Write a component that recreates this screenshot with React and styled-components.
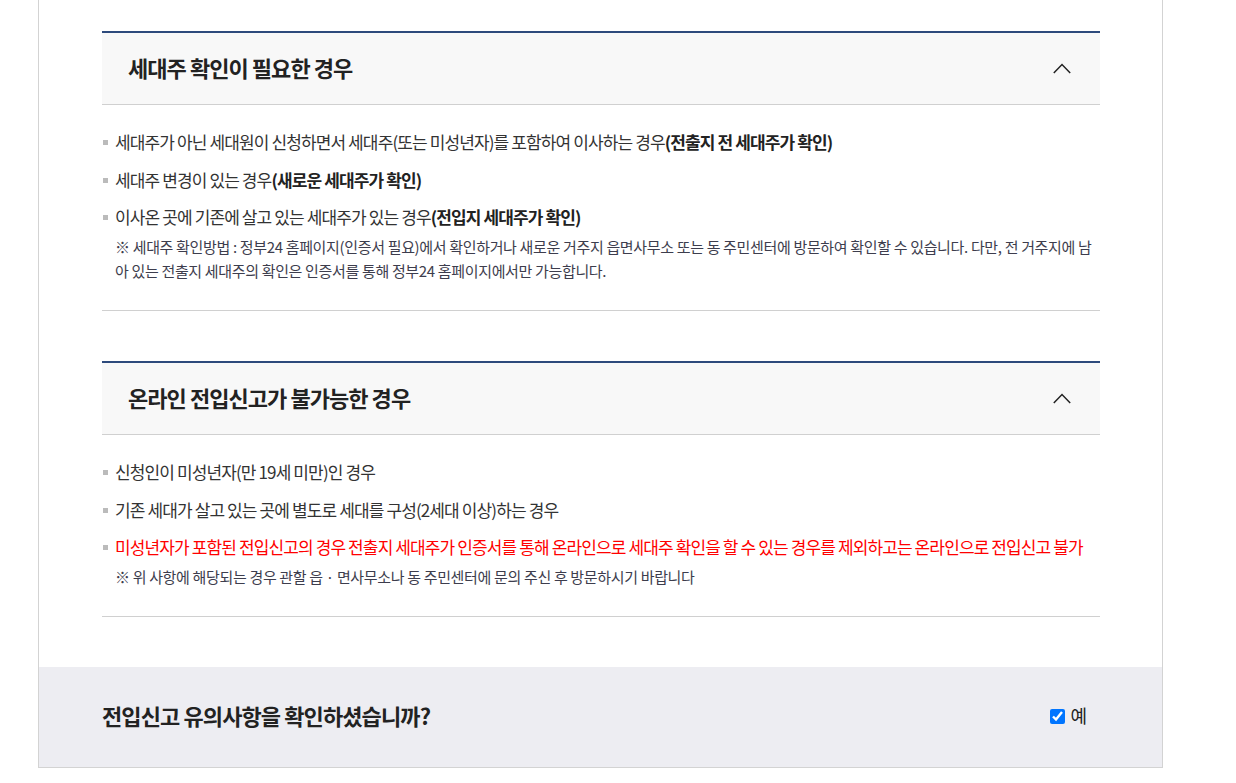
import React, { useState } from "react";
import styled, { createGlobalStyle } from "styled-components";

const GlobalStyle = createGlobalStyle`
  html, body {
    margin: 0;
    padding: 0;
    background: #fff;
  }
  body {
    font-family: "Noto Sans CJK KR", "Noto Sans", sans-serif;
    color: #222;
  }
`;

const Page = styled.div`
  padding-left: 38px;
  padding-bottom: 15px;
`;

const Panel = styled.div`
  width: 1125px;
  box-sizing: border-box;
  border-left: 1px solid #d3d3d3;
  border-right: 1px solid #d3d3d3;
  border-bottom: 1px solid #d3d3d3;
`;

const Content = styled.div`
  padding: 31px 62px 0 63px;
`;

const Accordion = styled.section`
  border-top: 2px solid #2d4a7c;
  border-bottom: 1px solid #d0d0d0;
  margin-bottom: 50px;
`;

const Header = styled.button`
  display: flex;
  align-items: center;
  justify-content: space-between;
  width: 100%;
  height: 72px;
  padding: 0 29px 0 26px;
  box-sizing: border-box;
  background: #f8f8f8;
  border: 0;
  border-bottom: 1px solid #d0d0d0;
  cursor: pointer;
  font-family: inherit;
`;

const HeaderTitle = styled.h3`
  margin: 0 0 3px;
  font-size: 22px;
  font-weight: 700;
  letter-spacing: -0.95px;
  color: #222;
  line-height: 1;
`;

const Chevron = ({ open }) => (
  <svg width="18" height="11" viewBox="0 0 18 11" style={{ transform: open ? "none" : "rotate(180deg)" }}>
    <polyline points="0.8,10 9,1.5 17.2,10" fill="none" stroke="#222" strokeWidth="1.5" />
  </svg>
);

const List = styled.ul`
  list-style: none;
  margin: 0;
  padding: 25px 0 27px;
`;

const Item = styled.li`
  position: relative;
  padding-left: 13px;
  font-size: 17px;
  line-height: 24px;
  letter-spacing: -0.88px;
  color: ${(p) => (p.$alert ? "#ff0000" : "#333")};
  & + & {
    margin-top: 13.5px;
  }
  &::before {
    content: "";
    position: absolute;
    left: 1px;
    top: 10px;
    width: 5px;
    height: 5px;
    background: #bbb;
  }
  b {
    font-weight: 700;
    color: #222;
  }
`;

const Note = styled.p`
  margin: 6px 0 0;
  padding-left: 13px;
  font-size: 15px;
  line-height: 24px;
  letter-spacing: -0.34px;
  color: #3d3d4d;
`;

const ConfirmBar = styled.div`
  display: flex;
  align-items: center;
  justify-content: space-between;
  height: 100px;
  box-sizing: border-box;
  padding: 0 75px 5px 63px;
  background: #ededf2;
`;

const ConfirmTitle = styled.h3`
  margin: 0;
  font-size: 22px;
  font-weight: 700;
  letter-spacing: -0.9px;
  color: #222;
`;

const CheckLabel = styled.label`
  display: flex;
  align-items: center;
  gap: 5px;
  font-size: 18px;
  line-height: 1;
  color: #222;
  cursor: pointer;
  input {
    width: 15px;
    height: 15px;
    margin: 4px 0 0;
    accent-color: #0075ff;
  }
`;

function Section({ title, children }) {
  const [open, setOpen] = useState(true);
  return (
    <Accordion>
      <Header onClick={() => setOpen(!open)}>
        <HeaderTitle>{title}</HeaderTitle>
        <Chevron open={open} />
      </Header>
      {open && children}
    </Accordion>
  );
}

export default function App() {
  const [checked, setChecked] = useState(true);
  return (
    <Page>
      <GlobalStyle />
      <Panel>
        <Content>
          <Section title="세대주 확인이 필요한 경우">
            <List>
              <Item>
                세대주가 아닌 세대원이 신청하면서 세대주(또는 미성년자)를 포함하여 이사하는 경우<b>(전출지 전 세대주가 확인)</b>
              </Item>
              <Item>
                세대주 변경이 있는 경우<b>(새로운 세대주가 확인)</b>
              </Item>
              <Item>
                이사온 곳에 기존에 살고 있는 세대주가 있는 경우<b>(전입지 세대주가 확인)</b>
              </Item>
              <Note>
                ※ 세대주 확인방법 : 정부24 홈페이지(인증서 필요)에서 확인하거나 새로운 거주지 읍면사무소 또는 동 주민센터에 방문하여 확인할 수 있습니다. 다만, 전 거주지에 남아 있는 전출지 세대주의 확인은 인증서를 통해 정부24 홈페이지에서만 가능합니다.
              </Note>
            </List>
          </Section>
          <Section title="온라인 전입신고가 불가능한 경우">
            <List>
              <Item>신청인이 미성년자(만 19세 미만)인 경우</Item>
              <Item>기존 세대가 살고 있는 곳에 별도로 세대를 구성(2세대 이상)하는 경우</Item>
              <Item $alert>
                미성년자가 포함된 전입신고의 경우 전출지 세대주가 인증서를 통해 온라인으로 세대주 확인을 할 수 있는 경우를 제외하고는 온라인으로 전입신고 불가
              </Item>
              <Note>※ 위 사항에 해당되는 경우 관할 읍 · 면사무소나 동 주민센터에 문의 주신 후 방문하시기 바랍니다</Note>
            </List>
          </Section>
        </Content>
        <ConfirmBar>
          <ConfirmTitle>전입신고 유의사항을 확인하셨습니까?</ConfirmTitle>
          <CheckLabel>
            <input type="checkbox" checked={checked} onChange={(e) => setChecked(e.target.checked)} />
            예
          </CheckLabel>
        </ConfirmBar>
      </Panel>
    </Page>
  );
}
